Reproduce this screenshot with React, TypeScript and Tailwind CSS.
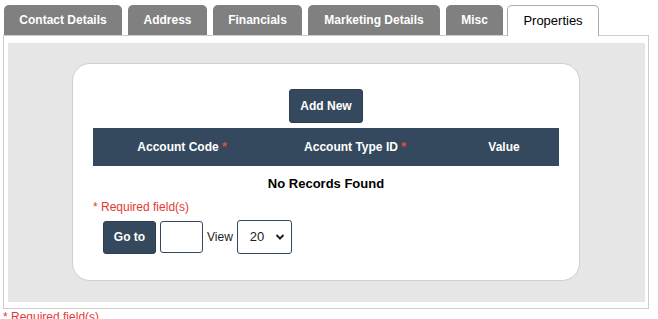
import React from "react";

const tabs: [string, string][] = [
  ["Contact Details", "w-[118px]"],
  ["Address", "w-[79px]"],
  ["Financials", "w-[89px]"],
  ["Marketing Details", "w-[132px]"],
  ["Misc", "w-[57px]"],
];

export default function App() {
  return (
    <div className="w-[658px] h-[319px] bg-white overflow-hidden" style={{ fontFamily: '"Liberation Sans", Arial, sans-serif' }}>
      <div className="flex items-end gap-[6px] pl-[4px] pt-[4px] h-[35px]">
        {tabs.map(([t, w]) => (
          <div
            key={t}
            className={`${w} h-[30px] flex items-center justify-center bg-[#808080] text-white font-bold text-[12px] rounded-t-[5px] whitespace-nowrap`}
          >
            {t}
          </div>
        ))}
        <div className="relative z-10 h-[31px] -mb-px ml-[-2px] flex items-center bg-white text-black text-[13px] rounded-t-[5px] border border-b-0 border-[#aaa] w-[92px] justify-center">
          Properties
        </div>
      </div>
      <div className="ml-[3px] w-[646px] h-[274px] border border-[#cccccc] pt-[7px] pl-[4px] pr-[2px] pb-[5px]">
        <div className="w-[637px] h-[259px] bg-[#e6e6e6] pt-[20px] pl-[64px]">
          <div className="w-[508px] h-[218px] bg-white border border-[#cfcfcf] rounded-[18px] pt-[25px] px-[20px]">
            <div className="flex justify-center">
              <button className="h-[34px] w-[74px] bg-[#34495e] border border-[#2c3e50] rounded-[3px] text-white font-bold text-[12px]">
                Add New
              </button>
            </div>
            <div className="mt-[5px] h-[38px] bg-[#34495e] flex items-center text-white font-bold text-[12px]">
              <div className="w-[178px] text-center">
                Account Code <span className="text-[#e74c3c]">*</span>
              </div>
              <div className="w-[168px] text-center">
                Account Type ID <span className="text-[#e74c3c]">*</span>
              </div>
              <div className="flex-1 text-center pl-[10px]">Value</div>
            </div>
            <div className="h-[34px] flex items-center justify-center font-bold text-[13px] text-black pt-[2px]">
              No Records Found
            </div>
            <div className="text-[12px] text-[#e53935] leading-[14px]">* Required field(s)</div>
            <div className="mt-[6px] flex items-center pl-[10px]">
              <button className="h-[33px] w-[53px] bg-[#34495e] border border-[#2c3e50] rounded-[3px] text-white font-bold text-[12px]">
                Go to
              </button>
              <div className="ml-[4px] w-[43px] h-[32px] border border-[#34495e] rounded-[3px] bg-white" />
              <span className="ml-[4px] text-[12px] text-[#222]">View</span>
              <div className="ml-[4px] w-[55px] h-[34px] border border-[#34495e] rounded-[3px] bg-white flex items-center pl-[12px] pr-[6px] justify-between">
                <span className="text-[13px] text-[#222]">20</span>
                <svg width="10" height="8" viewBox="0 0 10 8">
                  <path d="M1.5 2 L5 5.5 L8.5 2" fill="none" stroke="#222" strokeWidth="2" />
                </svg>
              </div>
            </div>
          </div>
        </div>
      </div>
      <div className="pl-[3px] pt-[1px] text-[12px] text-[#e53935] leading-[14px]">* Required field(s)</div>
    </div>
  );
}
